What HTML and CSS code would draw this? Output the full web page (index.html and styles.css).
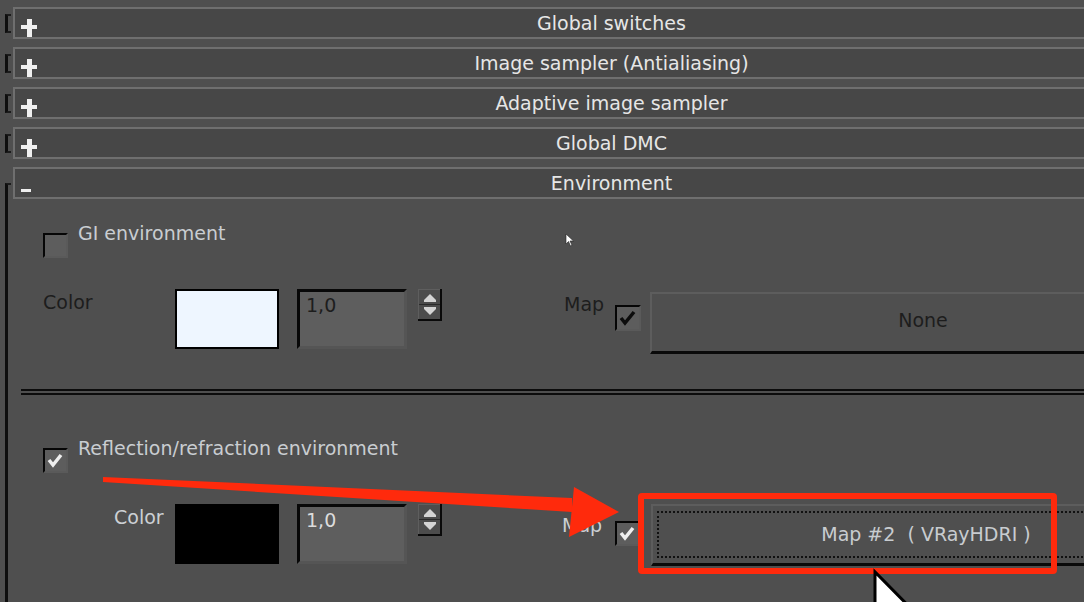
FILE: index.html
```html
<!DOCTYPE html>
<html>
<head>
<meta charset="utf-8">
<link rel="stylesheet" href="styles.css">
</head>
<body>
<div class="page">
  <div class="rollout">
    <div class="bracket"></div>
    <div class="header"><span class="plus"></span><span class="title">Global switches</span></div>
  </div>
  <div class="rollout">
    <div class="bracket"></div>
    <div class="header"><span class="plus"></span><span class="title">Image sampler (Antialiasing)</span></div>
  </div>
  <div class="rollout">
    <div class="bracket"></div>
    <div class="header"><span class="plus"></span><span class="title">Adaptive image sampler</span></div>
  </div>
  <div class="rollout">
    <div class="bracket"></div>
    <div class="header"><span class="plus"></span><span class="title">Global DMC</span></div>
  </div>
  <div class="rollout open">
    <div class="bracket long"></div>
    <div class="col">
      <div class="header"><span class="minus"></span><span class="title">Environment</span></div>
      <div class="env-body">
        <div class="opt-row first">
          <span class="cb"></span>
          <span class="opt-label">GI environment</span>
        </div>
        <div class="ctrl-row row-top">
          <span class="lbl dark lbl-color1">Color</span>
          <span class="swatch light-swatch"></span>
          <span class="field dark">1,0</span>
          <span class="spin">
            <svg width="24" height="32" viewBox="0 0 24 32">
              <rect x="0" y="0" width="24" height="32" fill="#4c4c4c"/>
              <rect x="0" y="0" width="24" height="1" fill="#5e5e5e"/>
              <rect x="0" y="0" width="1" height="32" fill="#5e5e5e"/>
              <rect x="22" y="0" width="2" height="32" fill="#0a0a0a"/>
              <rect x="0" y="30" width="24" height="2" fill="#0a0a0a"/>
              <rect x="1" y="15" width="21" height="1" fill="#2a2a2a"/>
              <polygon points="6,11 12,5 18,11" fill="#d4d4d4"/>
              <rect x="6" y="11" width="12" height="2" fill="#d4d4d4"/>
              <rect x="6" y="18" width="12" height="2" fill="#d4d4d4"/>
              <polygon points="6,20 12,26 18,20" fill="#d4d4d4"/>
            </svg>
          </span>
          <span class="lbl dark map-lbl1">Map</span>
          <span class="cb big cb-map1">
            <svg width="22" height="22" viewBox="0 0 22 22"><polyline points="4,11 8,16 17,5" fill="none" stroke="#0c0c0c" stroke-width="3.5"/></svg>
          </span>
          <span class="mapbtn none-btn">None</span>
        </div>
        <div class="sep"></div>
        <div class="opt-row second">
          <span class="cb">
            <svg width="21" height="21" viewBox="0 0 21 21"><polyline points="4,10 8,15 16,5" fill="none" stroke="#eeeeee" stroke-width="3.5"/></svg>
          </span>
          <span class="opt-label">Reflection/refraction environment</span>
        </div>
        <div class="ctrl-row row-bottom">
          <span class="lbl light lbl-color2">Color</span>
          <span class="swatch black-swatch"></span>
          <span class="field light">1,0</span>
          <span class="spin">
            <svg width="24" height="32" viewBox="0 0 24 32">
              <rect x="0" y="0" width="24" height="32" fill="#4c4c4c"/>
              <rect x="0" y="0" width="24" height="1" fill="#5e5e5e"/>
              <rect x="0" y="0" width="1" height="32" fill="#5e5e5e"/>
              <rect x="22" y="0" width="2" height="32" fill="#0a0a0a"/>
              <rect x="0" y="30" width="24" height="2" fill="#0a0a0a"/>
              <rect x="1" y="15" width="21" height="1" fill="#2a2a2a"/>
              <polygon points="6,11 12,5 18,11" fill="#d4d4d4"/>
              <rect x="6" y="11" width="12" height="2" fill="#d4d4d4"/>
              <rect x="6" y="18" width="12" height="2" fill="#d4d4d4"/>
              <polygon points="6,20 12,26 18,20" fill="#d4d4d4"/>
            </svg>
          </span>
          <span class="lbl light map-lbl2">Map</span>
          <span class="cb cb-map2">
            <svg width="21" height="21" viewBox="0 0 21 21"><polyline points="4,10 8,15 16,5" fill="none" stroke="#eeeeee" stroke-width="3.5"/></svg>
          </span>
          <span class="mapbtn hdri-btn"><span class="focus">Map #2&nbsp; ( VRayHDRI )</span></span>
        </div>
      </div>
    </div>
  </div>
</div>

<div class="red-box"></div>

<svg class="annot" width="1084" height="602" viewBox="0 0 1084 602">
  <polygon points="103,477 572,498 572,512 103,482" fill="#ff2a0c"/>
  <polygon points="574,487 619,512 569,537" fill="#ff2a0c"/>
  <polygon points="566,234 566,244 568.5,241.5 570.5,246 572,245.3 570,241 573.5,241" fill="#ffffff" stroke="#222" stroke-width="0.6"/>
  <polygon points="875,572 875,680 900,655 918,700 934,693 916,650 952,650" fill="#ffffff" stroke="#000" stroke-width="3"/>
</svg>
</body>
</html>
```

FILE: styles.css
```css
html, body {
  margin: 0;
  padding: 0;
}
body {
  width: 1084px;
  height: 602px;
  overflow: hidden;
  background: #4f4f4f;
  font-family: "DejaVu Sans", Verdana, sans-serif;
  font-size: 19px;
  position: relative;
}
.page {
  padding-top: 7px;
  display: flex;
  flex-direction: column;
  gap: 8px;
  min-height: 595px;
}
.rollout {
  display: flex;
  flex-shrink: 0;
}
.rollout.open {
  flex: 1;
}
.bracket {
  margin-left: 5px;
  margin-top: 7px;
  margin-right: 2px;
  width: 3px;
  height: 15px;
  border-left: 3px solid #0e0e0e;
  border-top: 2px solid #1c1c1c;
  border-bottom: 2px solid #1c1c1c;
  flex-shrink: 0;
}
.bracket.long {
  margin-top: 16px;
  height: auto;
  border-bottom: none;
}
.col {
  display: flex;
  flex-direction: column;
}
.header {
  width: 1197px;
  height: 32px;
  box-sizing: border-box;
  border: 2px solid #6f6f6f;
  background: #474747;
  display: grid;
  flex-shrink: 0;
}
.title {
  grid-area: 1 / 1;
  justify-self: center;
  align-self: center;
  color: #e6e6e6;
  line-height: 24px;
}
.plus {
  grid-area: 1 / 1;
  justify-self: start;
  align-self: start;
  margin-left: 6px;
  margin-top: 10px;
  width: 16px;
  height: 18px;
  background:
    linear-gradient(#f0f0f0, #f0f0f0) center top / 5px 100% no-repeat,
    linear-gradient(#f0f0f0, #f0f0f0) 0 6px / 100% 4px no-repeat;
}
.minus {
  grid-area: 1 / 1;
  justify-self: start;
  align-self: start;
  margin-left: 6px;
  margin-top: 20px;
  width: 10px;
  height: 3px;
  background: #eeeeee;
}
.env-body {
  display: flex;
  flex-direction: column;
}
.opt-row {
  display: flex;
  align-items: flex-start;
  padding-left: 30px;
}
.opt-row.first {
  margin-top: 22px;
}
.opt-row.second {
  margin-top: 41px;
}
.cb {
  width: 25px;
  height: 25px;
  box-sizing: border-box;
  border-top: 2px solid #060606;
  border-left: 2px solid #060606;
  border-right: 2px solid #5a5a5a;
  border-bottom: 2px solid #5a5a5a;
  background: #5d5d5d;
  margin-top: 12px;
  flex-shrink: 0;
  display: flex;
}
.cb svg {
  display: block;
}
.cb.big {
  width: 26px;
  height: 26px;
}
.opt-label {
  margin-left: 10px;
  line-height: 24px;
  color: #c9cdd1;
  white-space: nowrap;
}
.ctrl-row {
  display: flex;
  align-items: flex-start;
  flex-shrink: 0;
}
.row-top {
  margin-top: 31px;
  padding-left: 30px;
}
.row-bottom {
  margin-top: 31px;
  padding-left: 101px;
}
.lbl {
  line-height: 24px;
  white-space: nowrap;
  flex-shrink: 0;
}
.dark {
  color: #1d1d1d;
}
.light {
  color: #ccd0d4;
}
.lbl-color1 {
  width: 132px;
  margin-top: 1px;
}
.lbl-color2 {
  width: 61px;
  margin-top: 1px;
}
.swatch {
  width: 104px;
  height: 60px;
  box-sizing: border-box;
  border: 2px solid #000;
  flex-shrink: 0;
}
.light-swatch {
  background: #eef6ff;
}
.black-swatch {
  background: #000;
}
.field {
  margin-left: 18px;
  width: 110px;
  height: 60px;
  box-sizing: border-box;
  border-top: 3px solid #080808;
  border-left: 3px solid #080808;
  border-right: 3px solid #555555;
  border-bottom: 3px solid #555555;
  background: #5e5e5e;
  padding-left: 6px;
  padding-top: 1px;
  line-height: 24px;
  flex-shrink: 0;
}
.field.light {
  color: #dcdcdc;
}
.spin {
  margin-left: 11px;
  width: 24px;
  height: 32px;
  flex-shrink: 0;
}
.spin svg {
  display: block;
}
.map-lbl1 {
  margin-left: 122px;
  margin-top: 3px;
  width: 40px;
}
.cb-map1 {
  margin-left: 11px;
  margin-top: 16px;
}
.map-lbl2 {
  margin-left: 120px;
  margin-top: 9px;
  width: 40px;
}
.cb-map2 {
  margin-left: 13px;
  margin-top: 17px;
}
.mapbtn {
  width: 544px;
  height: 62px;
  box-sizing: border-box;
  border-top: 2px solid #5d5d5d;
  border-left: 2px solid #5d5d5d;
  border-bottom: 3px solid #0a0a0a;
  background: #4f4f4f;
  flex-shrink: 0;
  display: flex;
  align-items: center;
  justify-content: center;
  white-space: nowrap;
}
.none-btn {
  margin-left: 9px;
  margin-top: 3px;
  color: #1d1d1d;
  padding-bottom: 6px;
}
.hdri-btn {
  margin-left: 11px;
  color: #c8ccd0;
  padding: 5px 0 5px 4px;
  align-items: stretch;
}
.focus {
  flex: 1;
  border: 2px dotted #111;
  display: flex;
  align-items: center;
  justify-content: center;
  padding-bottom: 2px;
}
.sep {
  margin-top: 35px;
  margin-left: 8px;
  width: 1189px;
  height: 2px;
  border-top: 2px solid #0c0c0c;
  border-bottom: 2px solid #0c0c0c;
  flex-shrink: 0;
}
.red-box {
  position: absolute;
  left: 638px;
  top: 493px;
  width: 419px;
  height: 81px;
  box-sizing: border-box;
  border: 6px solid #ff2a0c;
  border-radius: 4px;
}
.annot {
  position: absolute;
  left: 0;
  top: 0;
  pointer-events: none;
}
```
